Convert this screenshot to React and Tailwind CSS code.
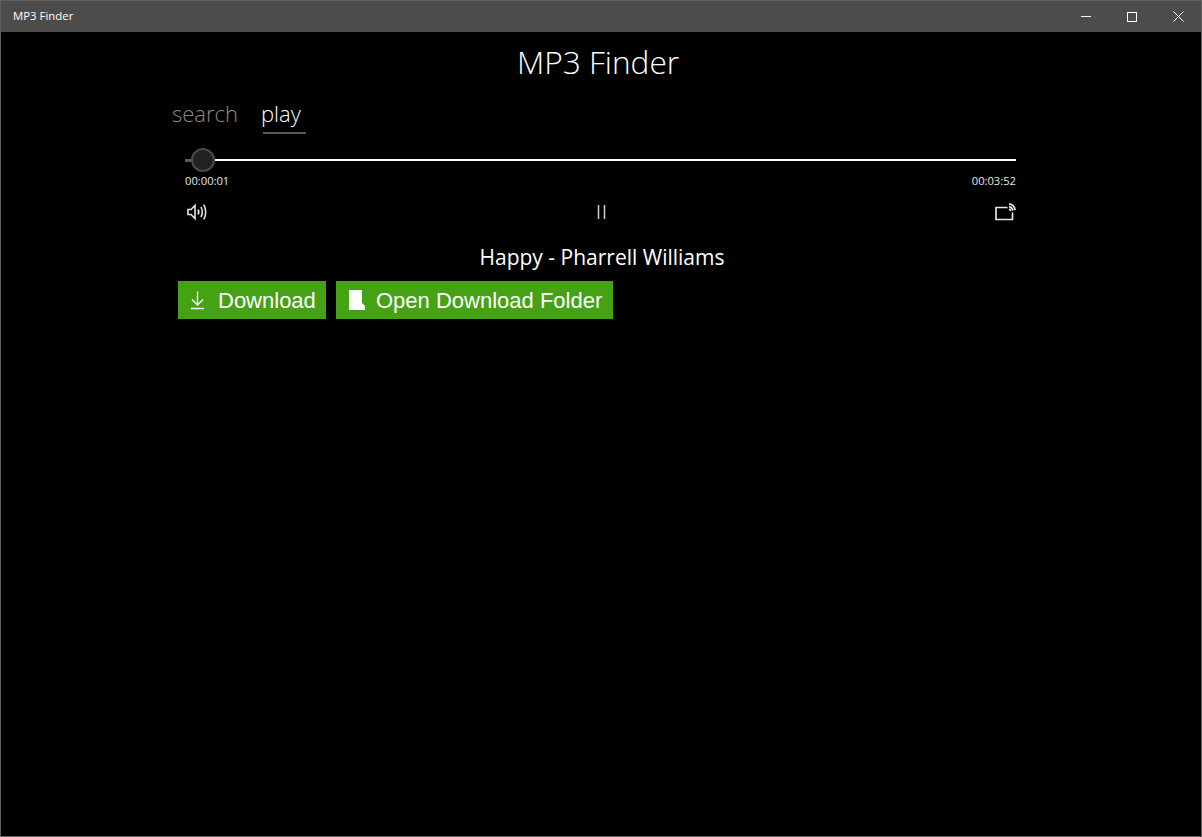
const sans = "font-['Open_Sans',sans-serif]";

const App = () => {
  return (
    <div className={`h-[837px] w-[1202px] overflow-hidden border border-[#5f5f5d] bg-black text-white ${sans}`}>
      {/* Title bar */}
      <div className="flex h-[31px] items-center justify-between bg-[#4d4c4a] pl-3">
        <span className="-mt-[2px] text-[11.4px] leading-none">MP3 Finder</span>
        <div className="flex items-center">
          <div className="flex h-[31px] w-[46px] items-center justify-center">
            <div className="h-px w-[10px] bg-white" />
          </div>
          <div className="flex h-[31px] w-[46px] items-center justify-center">
            <div className="h-[10px] w-[10px] border border-white" />
          </div>
          <div className="flex h-[31px] w-[46px] items-center justify-center">
            <svg width="11" height="11" viewBox="0 0 11 11" stroke="white" strokeWidth="1" fill="none">
              <path d="M0.5 0.5L10.5 10.5M10.5 0.5L0.5 10.5" />
            </svg>
          </div>
        </div>
      </div>

      {/* Heading */}
      <h1 className="mt-[7px] h-[46px] pr-[6px] text-center text-[31.6px] font-light leading-[46px]">MP3 Finder</h1>

      {/* Tabs */}
      <div className="ml-[171px] mt-[12px] flex gap-[23px]">
        <div className="text-[22px] font-light leading-[32px] text-[#8a8a8a]">search</div>
        <div className="flex flex-col">
          <div className="text-[22px] font-light leading-[32px]">play</div>
          <div className="ml-[2px] mt-[3px] h-[2px] w-[43px] bg-[#5a5a5a]" />
        </div>
      </div>

      {/* Player */}
      <div className="ml-[184px] mt-[14px] w-[831px]">
        <div className="flex h-[24px] items-center">
          <div className="h-[3px] w-[7px] bg-[#5a5a5a]" />
          <div className="z-10 -ml-px h-[24px] w-[24px] shrink-0 rounded-full border-2 border-[#4a4a4a] bg-[#212121]" />
          <div className="h-[2px] flex-1 bg-white" />
        </div>
        <div className="mt-[2px] flex justify-between text-[11.2px] leading-[14px] text-[#e6e6e6]">
          <span>00:00:01</span>
          <span>00:03:52</span>
        </div>
        <div className="mt-[14px] flex h-[20px] items-center justify-between">
          <svg width="24" height="20" viewBox="0 0 24 20" fill="none" stroke="#e6e6e6" strokeWidth="1.6" className="-ml-px">
            <path d="M4 7.5H7L11 3.5V16.5L7 12.5H4Z" />
            <path d="M14 7.5Q15.6 10 14 12.5" />
            <path d="M17 5Q19.6 10 17 15" />
            <path d="M19.8 2.5Q23.6 10 19.8 17.5" />
          </svg>
          <svg width="12" height="16" viewBox="0 0 12 16" fill="none" stroke="#cfcfcf" strokeWidth="1.5">
            <path d="M2.5 1V15M8.5 1V15" />
          </svg>
          <svg width="21" height="18" viewBox="0 0 21 18" fill="none" stroke="#e6e6e6" strokeWidth="1.7">
            <path d="M12.5 4.5H1V16.5H17.5V9.5" />
            <path d="M14 0.9Q19.2 1.5 20.2 7" />
            <path d="M14 3.6Q17.2 4 18 7.5" />
            <path d="M14 6.2Q15.4 6.4 15.8 8" />
          </svg>
        </div>
      </div>

      {/* Track */}
      <div className="mt-[21px] pl-[2px] text-center text-[21px] leading-[28px]">Happy - Pharrell Williams</div>

      {/* Actions */}
      <div className="ml-[177px] mt-[10px] flex gap-[10px] font-['Liberation_Sans',sans-serif] text-[22px]">
        <button className="flex h-[38px] w-[148px] items-center gap-[14px] bg-[#46a215] pl-[13px]">
          <svg width="13" height="19" viewBox="0 0 13 19" fill="none" stroke="white" strokeWidth="1.3">
            <path d="M6.5 0.5V14M1 8.5L6.5 14L12 8.5M0 17.5H13" />
          </svg>
          <span>Download</span>
        </button>
        <button className="flex h-[38px] w-[277px] items-center gap-[11px] bg-[#46a215] pl-[13px]">
          <svg width="16" height="20" viewBox="0 0 16 20" fill="white">
            <path d="M0 0H13V13L16 16V20H0Z" />
          </svg>
          <span>Open Download Folder</span>
        </button>
      </div>
    </div>
  );
};

export default App;
